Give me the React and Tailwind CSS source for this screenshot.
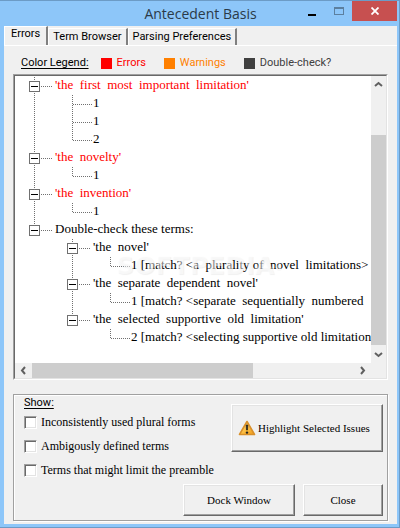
import React, { useState } from 'react';

const tabs = ['Errors', 'Term Browser', 'Parsing Preferences'];

const legend = [
  { label: 'Errors', box: 'bg-[#ff0000]', text: 'text-[#ff0000]' },
  { label: 'Warnings', box: 'bg-[#ff8000]', text: 'text-[#ff8000]' },
  { label: 'Double-check?', box: 'bg-[#404040]', text: 'text-[#404040]' },
];

// guides: for every ancestor level, whether its dotted line runs past this row
const rows = [
  { text: "'the  first  most  important  limitation'", guides: [], parent: true, error: true },
  { text: '1', guides: [true] },
  { text: '1', guides: [true] },
  { text: '2', guides: [true], last: true },
  { text: "'the  novelty'", guides: [], parent: true, error: true },
  { text: '1', guides: [true], last: true },
  { text: "'the  invention'", guides: [], parent: true, error: true },
  { text: '1', guides: [true], last: true },
  { text: 'Double-check these terms:', guides: [], parent: true, last: true },
  { text: "'the  novel'", guides: [false], parent: true },
  { text: '1 [match? <a  plurality of  novel  limitations>', guides: [false, true], last: true },
  { text: "'the  separate  dependent  novel'", guides: [false], parent: true },
  { text: '1 [match? <separate  sequentially  numbered', guides: [false, true], last: true },
  { text: "'the  selected  supportive  old  limitation'", guides: [false], parent: true, last: true },
  { text: '2 [match? <selecting supportive old limitation', guides: [false, false], last: true },
];

const options = ['Inconsistently used plural forms', 'Ambigously defined terms', 'Terms that might limit the preamble'];

const Guide = ({ on }) => (
  <svg width="38" height="18" className="shrink-0" shapeRendering="crispEdges" stroke="#707070" strokeDasharray="1 1">
    {on && <path d="M5.5 0V18" />}
  </svg>
);

const Branch = ({ parent, last }) => (
  <svg width="26" height="18" className="shrink-0" shapeRendering="crispEdges" fill="none" stroke="#707070">
    <path d={last ? 'M5.5 0V10' : 'M5.5 0V18'} strokeDasharray="1 1" />
    <path d={parent ? 'M12 9.5H24' : 'M6 9.5H25'} strokeDasharray="1 1" />
    {parent && (
      <>
        <rect x="0.5" y="4.5" width="10" height="10" fill="#fff" />
        <path d="M2 9.5H9" stroke="#000" />
      </>
    )}
  </svg>
);

const Chevron = ({ d }) => (
  <svg width="9" height="9" viewBox="0 0 9 9" fill="none" stroke="#606060" strokeWidth="2">
    <path d={d} />
  </svg>
);

const WarningIcon = () => (
  <svg width="18" height="16" viewBox="0 0 18 16" className="shrink-0">
    <defs>
      <linearGradient id="warn" x1="0" y1="0" x2="1" y2="1">
        <stop offset="0" stopColor="#ffe58a" />
        <stop offset="0.6" stopColor="#fbb93a" />
        <stop offset="1" stopColor="#ee9a1c" />
      </linearGradient>
    </defs>
    <path d="M9 1.5L16.5 14.5H1.5Z" fill="url(#warn)" stroke="#d9902a" strokeWidth="1.6" strokeLinejoin="round" />
    <path d="M8.2 5H9.8L9.5 10H8.5Z" fill="#222" stroke="#222" strokeWidth="0.7" />
    <circle cx="9" cy="12.6" r="1.2" fill="#222" />
  </svg>
);

const raised =
  'border border-t-white border-l-white border-b-[#696969] border-r-[#696969] shadow-[inset_-1px_-1px_#a0a0a0,inset_1px_1px_#e3e3e3] font-["Liberation_Serif",serif] text-[11px] text-black';

export default function App() {
  const [active, setActive] = useState('Errors');

  return (
    <div className='flex min-h-screen flex-col border-t border-r border-b border-[#6c9bc6] bg-[#8dc6f9] pr-0.5 pb-[3px] pl-1 font-[Roboto,sans-serif] text-[11px] text-black'>
      <header className="relative flex h-[25px] items-center justify-center">
        <h1 className='font-["Open_Sans",sans-serif] text-[14px] leading-5 text-[#2b3a48]'>Antecedent Basis</h1>
        <div className="absolute top-0 right-0 flex h-5 items-center">
          <button aria-label="Minimize" className="flex h-5 w-[27px] items-center justify-center">
            <span className="mt-[7px] h-0.5 w-2 bg-black" />
          </button>
          <button aria-label="Maximize" className="flex h-5 w-[27px] items-center justify-center">
            <span className="h-2 w-[10px] border border-t-2 border-[#5c7f9f]" />
          </button>
          <button aria-label="Close window" className="flex h-5 w-[45px] items-center justify-center bg-[#c75050]">
            <svg width="8" height="8" viewBox="0 0 8 8" stroke="#fff" strokeWidth="1.8">
              <path d="M0.5 0.5L7.5 7.5M7.5 0.5L0.5 7.5" />
            </svg>
          </button>
        </div>
      </header>

      <main className="flex grow flex-col bg-[#f0f0f0]">
        <div role="tablist" className="flex h-5 items-end border-b border-white">
          {tabs.map((tab) => (
            <button
              key={tab}
              role="tab"
              aria-selected={active === tab}
              onClick={() => setActive(tab)}
              className={`border-t border-l border-r-2 border-t-white border-l-white border-r-[#808080] leading-[14px] ${
                active === tab ? 'h-[19px] px-[6px] pb-1' : 'h-[17px] px-1'
              }`}
            >
              {tab}
            </button>
          ))}
        </div>

        <div className="flex h-7 items-center gap-3 pt-[6px] pl-[17px]">
          <span className="leading-4 underline underline-offset-2">Color Legend:</span>
          <div className="flex items-center gap-[18px]">
            {legend.map((item) => (
              <span key={item.label} className={`flex items-center gap-[5px] leading-4 ${item.text}`}>
                <span className={`size-[11px] ${item.box}`} />
                {item.label}
              </span>
            ))}
          </div>
        </div>

        <section className="mx-[9px] border border-t-[#a0a0a0] border-l-[#a0a0a0] border-r-white border-b-white">
          <div className="grid grid-cols-[1fr_15px] grid-rows-[287px_15px] border border-t-[#696969] border-l-[#696969] border-r-[#e3e3e3] border-b-[#e3e3e3] bg-[#f0f0f0]">
            <div className="relative overflow-hidden bg-white pt-px">
              <ul className='pl-[14px] font-["Liberation_Serif",serif] text-[13px]'>
                {rows.map((row, i) => (
                  <li key={i} className="flex h-[18px]">
                    {row.guides.map((on, level) => (
                      <Guide key={level} on={on} />
                    ))}
                    <Branch parent={row.parent} last={row.last} />
                    <span className={`leading-4 whitespace-pre ${row.error ? 'text-[#ff0000]' : ''}`}>{row.text}</span>
                  </li>
                ))}
              </ul>
              <span className='pointer-events-none absolute top-[174px] left-[101px] font-["DejaVu_Sans",sans-serif] text-[25px] leading-8 font-bold text-white/50 [text-shadow:1px_1px_1px_rgb(0_0_0/0.06)]'>
                SOFTPEDIA<sup className="text-[8px]">®</sup>
              </span>
            </div>
            <div className="flex flex-col items-center">
              <span className="flex h-[17px] items-center"><Chevron d="M1 6L4.5 3L8 6" /></span>
              <span className="mt-[42px] w-full grow bg-[#cdcdcd]" />
              <span className="flex h-[18px] items-center"><Chevron d="M1 3L4.5 6L8 3" /></span>
            </div>
            <div className="flex items-center">
              <span className="flex w-[17px] justify-center"><Chevron d="M6 1L3 4.5L6 8" /></span>
              <span className="h-full w-[62%] bg-[#cdcdcd]" />
              <span className="ml-auto flex w-[18px] justify-center"><Chevron d="M3 1L6 4.5L3 8" /></span>
            </div>
          </div>
        </section>

        <fieldset className="mx-[9px] mt-[14px] mb-[3px] flex flex-col border border-[#a0a0a0] px-1 pt-px pb-1 shadow-[1px_1px_#fff,inset_1px_1px_#fff]">
          <div className="flex items-start justify-between">
            <div className="pl-[6px]">
              <p className="leading-[14px] underline underline-offset-2">Show:</p>
              <div className="mt-1 flex flex-col gap-2">
                {options.map((option) => (
                  <label key={option} className='flex h-4 items-center gap-1 font-["Liberation_Serif",serif] text-[12px] whitespace-nowrap'>
                    <input
                      type="checkbox"
                      className="size-[13px] appearance-none border border-t-[#a0a0a0] border-l-[#a0a0a0] border-r-white border-b-white bg-white shadow-[inset_1px_1px_#696969,inset_-1px_-1px_#e3e3e3] checked:bg-[#404040]"
                    />
                    {option}
                  </label>
                ))}
              </div>
            </div>
            <button className={`${raised} mt-2 flex h-12 w-[152px] items-center gap-0.5 pl-[6px]`}>
              <WarningIcon />
              Highlight Selected Issues
            </button>
          </div>
          <div className="mt-[6px] flex justify-end gap-2">
            <button className={`${raised} h-8 w-28`}>Dock Window</button>
            <button className={`${raised} h-8 w-20`}>Close</button>
          </div>
        </fieldset>
      </main>
    </div>
  );
}
